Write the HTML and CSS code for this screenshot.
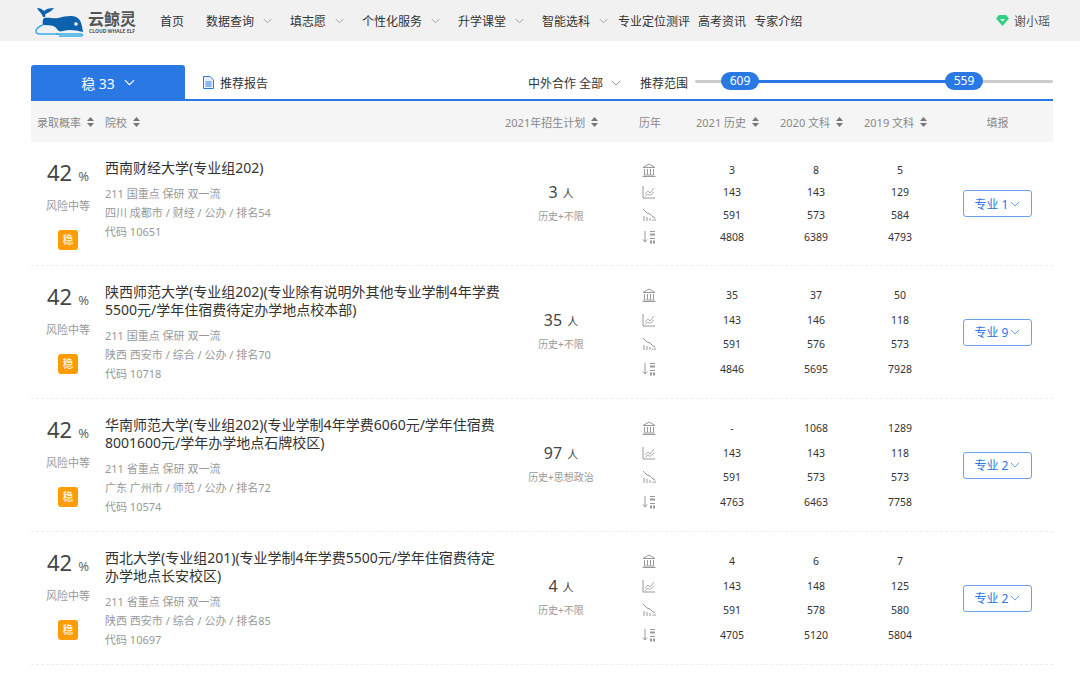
FILE: index.html
```html
<!DOCTYPE html>
<html lang="zh-CN">
<head>
    <meta charset="UTF-8">
    <meta name="viewport" content="width=device-width, initial-scale=1.0">
    <title>云鲸灵</title>
    <link rel="stylesheet" href="styles.css">
</head>
<body>
    <svg class="sprite" width="0" height="0">
        <symbol id="i-chev" viewBox="0 0 10 6"><path d="M.8.8 5 5 9.200.8" fill="none" stroke="currentColor"/></symbol>
        <symbol id="i-sort" viewBox="0 0 7 10"><path d="M3.500 0 7 4H0zM0 6h7l-3.500 4z" fill="currentColor"/></symbol>
        <symbol id="i-bank" viewBox="0 0 14 14" fill="none" stroke="currentColor"><path d="M1 4.500 7 1l6 3.500zM2.500 6v5.500M5.500 6v5.500M8.500 6v5.500M11.500 6v5.500M1.500 12h11M.5 13.500h13"/></symbol>
        <symbol id="i-up" viewBox="0 0 14 14" fill="none" stroke="currentColor"><path d="M1 1v12h12"/><path d="m3 9 3-3 2 2 4-5M3 11.500l3-2.500 2 1.500 4-3.500" stroke-width=".8"/></symbol>
        <symbol id="i-down" viewBox="0 0 14 14" fill="none" stroke="currentColor"><path d="m1 1 4 4 3 1 3 3 2 .5"/><path d="M2 13V8M5 13V9M8 13v-3M11 13v-1.500M13 13v-2.500"/></symbol>
        <symbol id="i-rank" viewBox="0 0 14 14"><path d="M3 1v11M1 9.500 3 12l2-2.500" fill="none" stroke="currentColor"/><path d="M8 1h5v1H8zM8 3.500h5v2H8zM8 8h5v1H8zM8 10.500h2v3H8zM11 10.500h2v3h-2z" fill="currentColor"/></symbol>
    </svg>

    <header class="topbar">
        <a class="logo">
            <svg width="50" height="32" viewBox="0 0 50 32">
                <path d="M8 12C7 8 4 7 2 3c3 0 5 1 7 3 2-2 5-3 10-3-2 3-6 5-8.500 6l-.5 3z" fill="#0d62ad"/>
                <path d="M9 13c5-1 10 1 14 0 7-2 14-3 18-1 5 2 6 8 7 15-8-2-14-3-20-1-3 1-5 0-6-2-3-5-9-3-14-4-1-3 0-6 1-7z" fill="#0d62ad"/>
                <circle cx="41" cy="19" r="1.800" fill="#fff"/>
                <path d="M8 20c-4 1-7 4-7 6 0 2 2 3 4 3h19" fill="none" stroke="#38ace8" stroke-width="1.500"/>
                <path d="M21 29h25c2 0 2 2 0 2H24" fill="none" stroke="#38ace8" stroke-width="1.500"/>
            </svg>
            <span class="logo-text">
                <b>云鲸灵</b>
                <small>CLOUD WHALE ELF</small>
            </span>
        </a>
        <nav class="nav">
            <a class="nav-item nav-home">首页</a>
            <a class="nav-item has-sub">数据查询<svg class="chev"><use href="#i-chev"/></svg></a>
            <a class="nav-item has-sub">填志愿<svg class="chev"><use href="#i-chev"/></svg></a>
            <a class="nav-item has-sub">个性化服务<svg class="chev"><use href="#i-chev"/></svg></a>
            <a class="nav-item has-sub">升学课堂<svg class="chev"><use href="#i-chev"/></svg></a>
            <a class="nav-item has-sub nav-tight">智能选科<svg class="chev"><use href="#i-chev"/></svg></a>
            <a class="nav-item">专业定位测评</a>
            <a class="nav-item">高考资讯</a>
            <a class="nav-item">专家介绍</a>
        </nav>
        <div class="user">
            <svg width="13" height="11" viewBox="0 0 13 11"><path d="M3 0h7l3 3.500L6.500 11 0 3.500z" fill="#2fd07f"/><path d="M4 4h5L6.500 6.500z" fill="#fff"/></svg>
            <span>谢小瑶</span>
        </div>
    </header>

    <main class="content">
        <div class="toolbar">
            <div class="tab-active">稳 33<svg class="tab-chev"><use href="#i-chev"/></svg></div>
            <div class="report">
                <svg width="11" height="13" viewBox="0 0 11 13"><path d="M.5.500h6.500l3.500 3.500v8.500H.5z" fill="#e6f0fd" stroke="#2a78e4"/><path d="M2.500 6h6M2.500 8h6M2.500 10h6" stroke="#2a78e4"/></svg>
                <span>推荐报告</span>
            </div>
            <div class="filter">中外合作 全部<svg class="chev"><use href="#i-chev"/></svg></div>
            <div class="range-label">推荐范围</div>
            <div class="slider">
                <div class="slider-fill"></div>
                <span class="handle handle-low">609</span>
                <span class="handle handle-high">559</span>
            </div>
        </div>

        <div class="table-head">
            <div class="th th-prob">录取概率<svg class="sort"><use href="#i-sort"/></svg></div>
            <div class="th">院校<svg class="sort"><use href="#i-sort"/></svg></div>
            <div class="th">2021年招生计划<svg class="sort"><use href="#i-sort"/></svg></div>
            <div class="th th-past">历年</div>
            <div class="th th-year">2021 历史<svg class="sort"><use href="#i-sort"/></svg></div>
            <div class="th th-year">2020 文科<svg class="sort"><use href="#i-sort"/></svg></div>
            <div class="th th-year">2019 文科<svg class="sort"><use href="#i-sort"/></svg></div>
            <div class="th th-action">填报</div>
        </div>

        <div class="row">
            <div class="prob">
                <div class="prob-num">42<span>%</span></div>
                <div class="risk">风险中等</div>
                <div class="badge">稳</div>
            </div>
            <div class="school">
                <h3>西南财经大学(专业组202)</h3>
                <p>211 国重点 保研 双一流</p>
                <p>四川 成都市 / 财经 / 公办 / 排名54</p>
                <p>代码 10651</p>
            </div>
            <div class="plan">
                <div class="plan-num">3<span>人</span></div>
                <div class="plan-sub">历史+不限</div>
            </div>
            <div class="stats">
                <svg class="stat-icon"><use href="#i-bank"/></svg><span>3</span><span>8</span><span>5</span>
                <svg class="stat-icon"><use href="#i-up"/></svg><span>143</span><span>143</span><span>129</span>
                <svg class="stat-icon"><use href="#i-down"/></svg><span>591</span><span>573</span><span>584</span>
                <svg class="stat-icon"><use href="#i-rank"/></svg><span>4808</span><span>6389</span><span>4793</span>
            </div>
            <div class="action"><button class="major-btn">专业 1<svg class="chev"><use href="#i-chev"/></svg></button></div>
        </div>

        <div class="row">
            <div class="prob">
                <div class="prob-num">42<span>%</span></div>
                <div class="risk">风险中等</div>
                <div class="badge">稳</div>
            </div>
            <div class="school">
                <h3>陕西师范大学(专业组202)(专业除有说明外其他专业学制4年学费5500元/学年住宿费待定办学地点校本部)</h3>
                <p>211 国重点 保研 双一流</p>
                <p>陕西 西安市 / 综合 / 公办 / 排名70</p>
                <p>代码 10718</p>
            </div>
            <div class="plan">
                <div class="plan-num">35<span>人</span></div>
                <div class="plan-sub">历史+不限</div>
            </div>
            <div class="stats">
                <svg class="stat-icon"><use href="#i-bank"/></svg><span>35</span><span>37</span><span>50</span>
                <svg class="stat-icon"><use href="#i-up"/></svg><span>143</span><span>146</span><span>118</span>
                <svg class="stat-icon"><use href="#i-down"/></svg><span>591</span><span>576</span><span>573</span>
                <svg class="stat-icon"><use href="#i-rank"/></svg><span>4846</span><span>5695</span><span>7928</span>
            </div>
            <div class="action"><button class="major-btn">专业 9<svg class="chev"><use href="#i-chev"/></svg></button></div>
        </div>

        <div class="row">
            <div class="prob">
                <div class="prob-num">42<span>%</span></div>
                <div class="risk">风险中等</div>
                <div class="badge">稳</div>
            </div>
            <div class="school">
                <h3>华南师范大学(专业组202)(专业学制4年学费6060元/学年住宿费8001600元/学年办学地点石牌校区)</h3>
                <p>211 省重点 保研 双一流</p>
                <p>广东 广州市 / 师范 / 公办 / 排名72</p>
                <p>代码 10574</p>
            </div>
            <div class="plan">
                <div class="plan-num">97<span>人</span></div>
                <div class="plan-sub">历史+思想政治</div>
            </div>
            <div class="stats">
                <svg class="stat-icon"><use href="#i-bank"/></svg><span>-</span><span>1068</span><span>1289</span>
                <svg class="stat-icon"><use href="#i-up"/></svg><span>143</span><span>143</span><span>118</span>
                <svg class="stat-icon"><use href="#i-down"/></svg><span>591</span><span>573</span><span>573</span>
                <svg class="stat-icon"><use href="#i-rank"/></svg><span>4763</span><span>6463</span><span>7758</span>
            </div>
            <div class="action"><button class="major-btn">专业 2<svg class="chev"><use href="#i-chev"/></svg></button></div>
        </div>

        <div class="row">
            <div class="prob">
                <div class="prob-num">42<span>%</span></div>
                <div class="risk">风险中等</div>
                <div class="badge">稳</div>
            </div>
            <div class="school">
                <h3>西北大学(专业组201)(专业学制4年学费5500元/学年住宿费待定办学地点长安校区)</h3>
                <p>211 省重点 保研 双一流</p>
                <p>陕西 西安市 / 综合 / 公办 / 排名85</p>
                <p>代码 10697</p>
            </div>
            <div class="plan">
                <div class="plan-num">4<span>人</span></div>
                <div class="plan-sub">历史+不限</div>
            </div>
            <div class="stats">
                <svg class="stat-icon"><use href="#i-bank"/></svg><span>4</span><span>6</span><span>7</span>
                <svg class="stat-icon"><use href="#i-up"/></svg><span>143</span><span>148</span><span>125</span>
                <svg class="stat-icon"><use href="#i-down"/></svg><span>591</span><span>578</span><span>580</span>
                <svg class="stat-icon"><use href="#i-rank"/></svg><span>4705</span><span>5120</span><span>5804</span>
            </div>
            <div class="action"><button class="major-btn">专业 2<svg class="chev"><use href="#i-chev"/></svg></button></div>
        </div>
    </main>
</body>
</html>
```

FILE: styles.css
```css
:root {
    --primary-color: #2a78e4;
    --text-color: #333;
    --muted: #999;
    --head-bg: #f5f5f5;
}

* {
    box-sizing: border-box;
}

html, body {
    height: 674px;
    overflow: hidden;
}

body {
    margin: 0;
    font-family: "Noto Sans", "Noto Sans CJK SC", sans-serif;
    font-size: 12px;
    color: var(--text-color);
    background-color: white;
}

.sprite {
    position: absolute;
}

.topbar {
    height: 41px;
    background-color: #f1f1f1;
    display: flex;
    align-items: center;
    padding-left: 35px;
    padding-right: 30px;
}

.logo {
    display: flex;
    align-items: center;
    width: 125px;
    gap: 3px;
}

.logo-text {
    display: flex;
    flex-direction: column;
    align-items: center;
    color: #555;
    line-height: 1;
    margin-top: 2px;
}

.logo-text b {
    font-size: 16px;
    letter-spacing: 0;
    line-height: 18px;
}

.logo-text small {
    font-size: 5px;
    font-weight: bold;
    white-space: nowrap;
    line-height: 6px;
}

.nav {
    display: flex;
    align-items: center;
    flex: 1;
}

.nav-item {
    display: flex;
    align-items: center;
    margin-right: 8px;
    white-space: nowrap;
}

.nav-home {
    margin-right: 22px;
}

.has-sub {
    margin-right: 18px;
}

.nav-tight {
    margin-right: 10px;
}

.chev {
    width: 9px;
    height: 6px;
    margin-left: 9px;
    color: #999;
}

.user {
    display: flex;
    align-items: center;
    gap: 5px;
    color: #555;
}

.content {
    margin: 25px 27px 0 31px;
}

.toolbar {
    display: flex;
    align-items: center;
    height: 35px;
    border-bottom: 2px solid var(--primary-color);
}

.tab-active {
    width: 154px;
    height: 35px;
    background-color: var(--primary-color);
    border-radius: 3px 3px 0 0;
    color: white;
    font-size: 14px;
    display: flex;
    align-items: center;
    justify-content: center;
}

.tab-chev {
    width: 11px;
    height: 7px;
    margin-left: 9px;
}

.report {
    display: flex;
    align-items: center;
    gap: 6px;
    margin-left: 18px;
    width: 325px;
}

.filter {
    display: flex;
    align-items: center;
    width: 112px;
}

.filter .chev {
    margin-left: 8px;
    width: 10px;
}

.range-label {
    width: 55px;
}

.slider {
    position: relative;
    flex: 1;
    height: 3px;
    background-color: #ccc;
    border-radius: 2px;
    margin-bottom: 3px;
}

.slider-fill {
    position: absolute;
    left: 43px;
    right: 90px;
    top: 0;
    height: 3px;
    background-color: var(--primary-color);
}

.handle {
    position: absolute;
    top: -8px;
    width: 38px;
    height: 18px;
    border-radius: 9px;
    background-color: var(--primary-color);
    color: white;
    text-align: center;
    line-height: 18px;
}

.handle-low {
    left: 26px;
}

.handle-high {
    left: 250px;
}

.table-head,
.row {
    display: grid;
    grid-template-columns: 74px 400px 112px 73px 84px 84px 84px 111px;
}

.table-head {
    height: 41px;
    background-color: var(--head-bg);
    align-items: center;
    font-size: 11px;
    color: #888;
}

.th {
    display: flex;
    align-items: center;
    white-space: nowrap;
}

.th-prob {
    padding-left: 6px;
}

.th-past {
    padding-left: 22px;
}

.th-year {
    padding-left: 6px;
}

.th-action {
    justify-content: center;
}

.sort {
    width: 7px;
    height: 10px;
    margin-left: 6px;
    color: #777;
}

.row {
    min-height: 124px;
    border-bottom: 1px dashed #eee;
}

.prob {
    display: flex;
    flex-direction: column;
    align-items: center;
    padding-top: 17px;
    padding-left: 0;
}

.prob-num {
    font-size: 22px;
    line-height: 26px;
    color: #444;
}

.prob-num span {
    font-size: 13px;
    margin-left: 6px;
    color: #666;
}

.risk {
    font-size: 11px;
    line-height: 16px;
    margin-top: 9px;
    color: var(--muted);
}

.badge {
    width: 20px;
    height: 20px;
    margin-top: 16px;
    background-color: #ff9d00;
    border-radius: 3px;
    color: white;
    font-size: 11px;
    line-height: 20px;
    text-align: center;
}

.school {
    padding: 17px 0 15px;
}

.school h3 {
    margin: 0 0 7px;
    font-size: 14px;
    font-weight: normal;
    line-height: 18px;
    color: #333;
}

.school p {
    margin: 0;
    font-size: 11px;
    line-height: 19px;
    color: var(--muted);
}

.plan {
    display: flex;
    flex-direction: column;
    align-items: center;
    justify-content: center;
}

.plan-num {
    font-size: 16px;
    line-height: 22px;
    color: #444;
}

.plan-num span {
    font-size: 11px;
    margin-left: 5px;
}

.plan-sub {
    font-size: 10px;
    line-height: 22px;
    color: var(--muted);
}

.stats {
    grid-column: span 4;
    display: grid;
    grid-template-columns: 73px repeat(3, 84px);
    grid-auto-rows: 1fr;
    align-items: center;
    justify-items: center;
    padding: 17px 0;
    font-size: 10.500px;
}

.stat-icon {
    width: 14px;
    height: 14px;
    color: #999;
    justify-self: start;
    margin-left: 25px;
}

.action {
    display: flex;
    align-items: center;
    justify-content: center;
}

.major-btn {
    width: 69px;
    height: 27px;
    padding: 0;
    background-color: white;
    border: 1px solid #6aa2ec;
    border-radius: 3px;
    color: var(--primary-color);
    font-family: inherit;
    font-size: 12px;
    display: flex;
    align-items: center;
    justify-content: center;
}

.major-btn .chev {
    margin-left: 2px;
    width: 10px;
    color: #6aa2ec;
}
```
